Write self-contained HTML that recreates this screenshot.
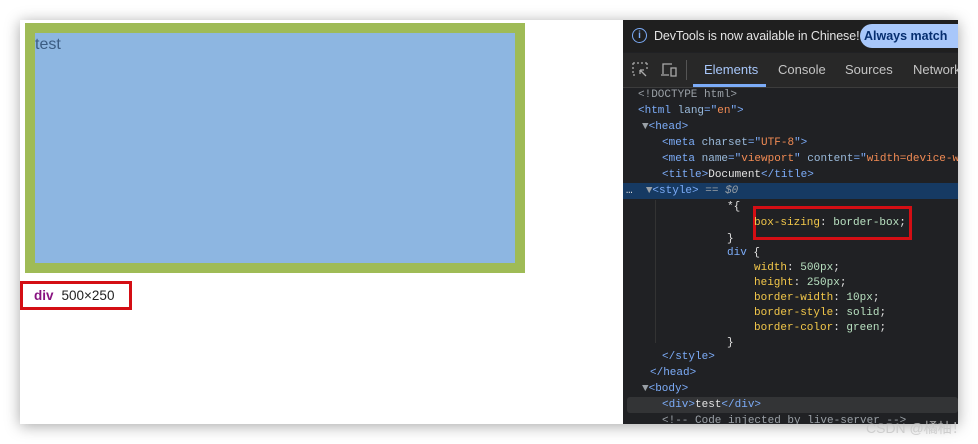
<!DOCTYPE html>
<html><head><style>
body{margin:0;width:978px;height:444px;background:#fff;position:relative;overflow:hidden;font-family:"Liberation Sans",sans-serif}
.win{position:absolute;left:20px;top:20px;width:938px;height:404px;background:#fff;box-shadow:0 2px 14px rgba(0,0,0,.35)}
.box{position:absolute;left:25px;top:23px;width:480px;height:230px;border:10px solid #9fbb56;background:#8db6e1}
.box span{position:absolute;left:0;top:3px;font-size:16px;color:#3b5c82}
.tip{position:absolute;left:20px;top:281px;width:112px;height:29px;border:3px solid #d40e14;box-sizing:border-box;background:#fff;font-size:13.5px;line-height:23px;padding-left:11px;color:#222}
.tip b{color:#881280;margin-right:8px}
.dt{position:absolute;left:623px;top:20px;width:335px;height:404px;background:#202124;overflow:hidden;color:#e3e3e3}
.info{position:absolute;left:0;top:0;width:335px;height:32px;background:#1f1f1f;font-size:12.5px}
.info .i{position:absolute;left:9px;top:8px;width:13px;height:13px;border:1.5px solid #7cacf8;border-radius:50%;color:#7cacf8;font-size:10px;text-align:center;line-height:13px;font-weight:bold}
.info .t{position:absolute;left:31px;top:9px;color:#e3e3e3;letter-spacing:-0.1px}
.info .btn{position:absolute;left:237px;top:4px;width:120px;height:24px;border-radius:12px;background:#a8c7fa;color:#062e6f;font-weight:bold;font-size:12.5px;line-height:24px;padding-left:4px}
.tabs{position:absolute;left:0;top:33px;width:335px;height:34px;background:#282828;border-bottom:1px solid #3c3c3c;font-size:13px}
.tabs span{position:absolute;top:9px;color:#c4c4c4}
.code{position:absolute;left:0;top:2px;font-family:"Liberation Mono",monospace;font-size:11px}
.l{position:absolute;white-space:pre;left:0;height:15px;line-height:15px}
.tg{color:#7cacf8}.at{color:#9bbbdc}.av{color:#f28b54}.pr{color:#f3c84a}.vl{color:#b8e0c0}.gr{color:#9aa0a6}.w{color:#e3e3e3}
</style></head><body>
<div class="win"></div>
<div class="box"><span>test</span></div>
<div style="position:absolute;left:36px;top:273px;width:0;height:0;border-left:5px solid transparent;border-right:5px solid transparent;border-bottom:6px solid #fff"></div>
<div class="tip"><b>div</b>500×250</div>
<div class="dt">
 <div class="info"><div class="i">i</div><div class="t">DevTools is now available in Chinese!</div><div class="btn">Always match Chrome</div></div>
 <div class="tabs">
  <svg style="position:absolute;left:9px;top:9px" width="16" height="16" viewBox="0 0 16 16" fill="none" stroke="#aaa" stroke-width="1.3"><path d="M1 1h2M5 1h2M9 1h2M13 1h2M1 1v2M1 5v2M1 9v2M1 13h2M15 1v2M15 5v2M8 8l6 6M8 8h4M8 8v4"/></svg>
  <svg style="position:absolute;left:37px;top:9px" width="18" height="16" viewBox="0 0 18 16" fill="none" stroke="#aaa" stroke-width="1.3"><path d="M3 12V2h9M1 13h8M11 6h5v8h-5z"/></svg>
  <div style="position:absolute;left:63px;top:7px;width:1px;height:20px;background:#555"></div>
  <span style="left:81px;color:#a8c7fa">Elements</span>
  <div style="position:absolute;left:70px;top:31px;width:73px;height:3px;background:#7cacf8"></div>
  <span style="left:155px">Console</span>
  <span style="left:222px">Sources</span>
  <span style="left:290px">Network</span>
 </div>
 <div style="position:absolute;left:0;top:163px;width:335px;height:16px;background:#163a63"></div>
 <div style="position:absolute;left:4px;top:377px;width:331px;height:16px;background:#333436;border-radius:3px"></div>
 <div style="position:absolute;left:32px;top:180px;width:1px;height:143px;background:#333"></div>
 <div style="position:absolute;left:130px;top:186px;width:159px;height:34px;border:3px solid #d40e14;box-sizing:border-box"></div>
 <div class="code">
  <div class="l gr" style="top:66px;left:15px">&lt;!DOCTYPE html&gt;</div>
  <div class="l" style="top:82px;left:15px"><span class="tg">&lt;html</span> <span class="at">lang</span><span class="tg">="</span><span class="av">en</span><span class="tg">"&gt;</span></div>
  <div class="l" style="top:98px;left:19px"><span class="gr">▼</span><span class="tg">&lt;head&gt;</span></div>
  <div class="l" style="top:114px;left:39px"><span class="tg">&lt;meta</span> <span class="at">charset</span><span class="tg">="</span><span class="av">UTF-8</span><span class="tg">"&gt;</span></div>
  <div class="l" style="top:130px;left:39px"><span class="tg">&lt;meta</span> <span class="at">name</span><span class="tg">="</span><span class="av">viewport</span><span class="tg">"</span> <span class="at">content</span><span class="tg">="</span><span class="av">width=device-width</span></div>
  <div class="l" style="top:146px;left:39px"><span class="tg">&lt;title&gt;</span><span class="w">Document</span><span class="tg">&lt;/title&gt;</span></div>
  <div class="l" style="top:162px;left:3px"><span class="w">…</span>  <span class="gr">▼</span><span class="tg">&lt;style&gt;</span> <span class="gr">== <i>$0</i></span></div>
  <div class="l w" style="top:178px;left:104px">*{</div>
  <div class="l" style="top:194px;left:131px"><span class="pr">box-sizing</span><span class="w">: </span><span class="vl">border-box</span><span class="w">;</span></div>
  <div class="l w" style="top:210px;left:104px">}</div>
  <div class="l" style="top:224px;left:104px"><span class="tg">div</span> <span class="w">{</span></div>
  <div class="l" style="top:239px;left:131px"><span class="pr">width</span><span class="w">: </span><span class="vl">500px</span><span class="w">;</span></div>
  <div class="l" style="top:254px;left:131px"><span class="pr">height</span><span class="w">: </span><span class="vl">250px</span><span class="w">;</span></div>
  <div class="l" style="top:269px;left:131px"><span class="pr">border-width</span><span class="w">: </span><span class="vl">10px</span><span class="w">;</span></div>
  <div class="l" style="top:284px;left:131px"><span class="pr">border-style</span><span class="w">: </span><span class="vl">solid</span><span class="w">;</span></div>
  <div class="l" style="top:299px;left:131px"><span class="pr">border-color</span><span class="w">: </span><span class="vl">green</span><span class="w">;</span></div>
  <div class="l w" style="top:314px;left:104px">}</div>
  <div class="l tg" style="top:328px;left:39px">&lt;/style&gt;</div>
  <div class="l tg" style="top:344px;left:27px">&lt;/head&gt;</div>
  <div class="l" style="top:360px;left:19px"><span class="gr">▼</span><span class="tg">&lt;body&gt;</span></div>
  <div class="l" style="top:376px;left:39px"><span class="tg">&lt;div&gt;</span><span class="w">test</span><span class="tg">&lt;/div&gt;</span></div>
  <div class="l gr" style="top:392px;left:39px">&lt;!-- Code injected by live-server --&gt;</div>
 </div>
</div>
<div style="position:absolute;left:866px;top:418px;font-size:14px;color:rgba(200,200,200,.85)">CSDN @橘柚！</div>
</body></html>
